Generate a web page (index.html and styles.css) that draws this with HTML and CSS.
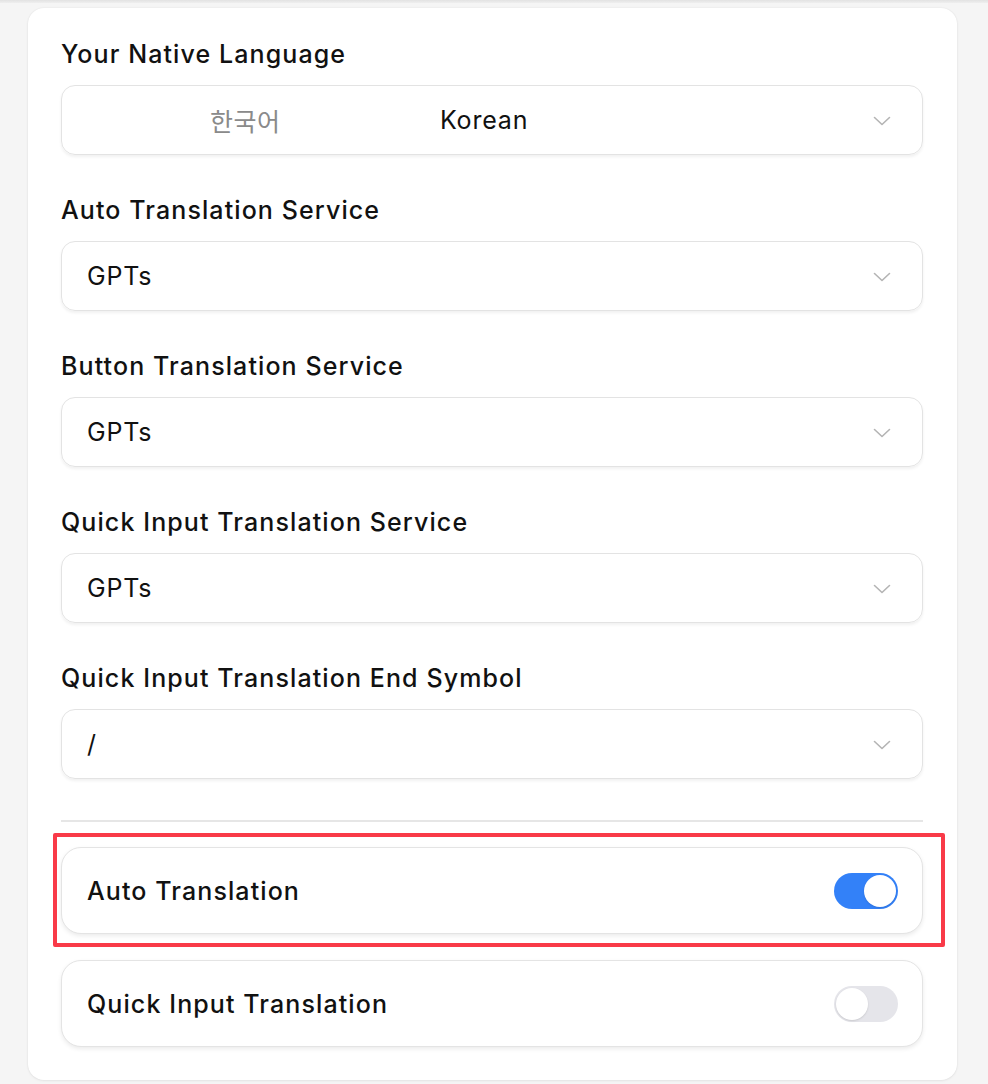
FILE: index.html
```html
<!DOCTYPE html>
<html lang="en">
<head>
<meta charset="utf-8">
<title>Settings</title>
<link rel="stylesheet" href="styles.css">
</head>
<body>
<div class="topbar"></div>
<main class="panel">
  <section class="field">
    <div class="label">Your Native Language</div>
    <div class="select">
      <span class="native">한국어</span>
      <span class="value">Korean</span>
      <svg class="chev" width="18" height="10" viewBox="0 0 18 10"><path d="M1.5 1.5 L9 8.5 L16.5 1.5" fill="none" stroke="#b4b4b4" stroke-width="1.6" stroke-linecap="round" stroke-linejoin="round"/></svg>
    </div>
  </section>
  <section class="field">
    <div class="label">Auto Translation Service</div>
    <div class="select">
      <span class="value">GPTs</span>
      <svg class="chev" width="18" height="10" viewBox="0 0 18 10"><path d="M1.5 1.5 L9 8.5 L16.5 1.5" fill="none" stroke="#b4b4b4" stroke-width="1.6" stroke-linecap="round" stroke-linejoin="round"/></svg>
    </div>
  </section>
  <section class="field">
    <div class="label">Button Translation Service</div>
    <div class="select">
      <span class="value">GPTs</span>
      <svg class="chev" width="18" height="10" viewBox="0 0 18 10"><path d="M1.5 1.5 L9 8.5 L16.5 1.5" fill="none" stroke="#b4b4b4" stroke-width="1.6" stroke-linecap="round" stroke-linejoin="round"/></svg>
    </div>
  </section>
  <section class="field">
    <div class="label">Quick Input Translation Service</div>
    <div class="select">
      <span class="value">GPTs</span>
      <svg class="chev" width="18" height="10" viewBox="0 0 18 10"><path d="M1.5 1.5 L9 8.5 L16.5 1.5" fill="none" stroke="#b4b4b4" stroke-width="1.6" stroke-linecap="round" stroke-linejoin="round"/></svg>
    </div>
  </section>
  <section class="field">
    <div class="label">Quick Input Translation End Symbol</div>
    <div class="select">
      <span class="value">/</span>
      <svg class="chev" width="18" height="10" viewBox="0 0 18 10"><path d="M1.5 1.5 L9 8.5 L16.5 1.5" fill="none" stroke="#b4b4b4" stroke-width="1.6" stroke-linecap="round" stroke-linejoin="round"/></svg>
    </div>
  </section>
  <hr class="divider">
  <div class="toggles">
    <div class="row-wrap">
      <div class="row">
        <span class="row-label">Auto Translation</span>
        <span class="switch on"><span class="knob"></span></span>
      </div>
      <div class="highlight"></div>
    </div>
    <div class="row-wrap">
      <div class="row">
        <span class="row-label">Quick Input Translation</span>
        <span class="switch"><span class="knob"></span></span>
      </div>
    </div>
  </div>
</main>
</body>
</html>
```

FILE: styles.css
```css
html, body {
  margin: 0;
  padding: 0;
}
body {
  background: #f5f5f5;
  font-family: Inter, "Noto Sans", "Noto Sans CJK KR", sans-serif;
  color: #111;
  height: 1084px;
  overflow: hidden;
}
.topbar {
  height: 3px;
  background: linear-gradient(#e2e2e2, #efefef);
}
.panel {
  box-sizing: border-box;
  width: 929px;
  margin: 5px 0 0 28px;
  background: #fff;
  border-radius: 16px;
  box-shadow: 0 0 2px rgba(0,0,0,0.08), 0 1px 3px rgba(0,0,0,0.05);
  padding: 30px 34px 33px 33px;
}
.field {
  margin-bottom: 39px;
}
.field:last-of-type {
  margin-bottom: 0;
}
.label {
  font-size: 25px;
  line-height: 32px;
  font-weight: 500;
  letter-spacing: 1.1px;
  margin-bottom: 15px;
}
.select {
  box-sizing: border-box;
  height: 70px;
  border: 1.5px solid #e3e3e3;
  border-radius: 14px;
  box-shadow: 0 2px 3px rgba(0,0,0,0.06);
  display: flex;
  align-items: center;
  padding: 0 31px 0 25px;
  font-size: 25px;
  letter-spacing: 0.8px;
}
.select .native {
  color: #8a8a8a;
  margin-left: 123px;
  width: 230px;
  letter-spacing: 0.5px;
}
.select .value {
  flex: 1;
  color: #111;
}
.chev {
  flex: none;
  margin-top: 1px;
}
.divider {
  border: none;
  height: 2px;
  background: #e6e6e6;
  margin: 41px 0 25px 0;
}
.toggles {
  display: flex;
  flex-direction: column;
  gap: 26px;
}
.row-wrap {
  position: relative;
}
.row {
  box-sizing: border-box;
  height: 87px;
  border: 1.5px solid #e4e4e4;
  border-radius: 20px;
  box-shadow: 0 2px 4px rgba(0,0,0,0.08);
  display: flex;
  align-items: center;
  justify-content: space-between;
  padding: 0 24px 0 25px;
  background: #fff;
}
.row-label {
  font-size: 25px;
  font-weight: 500;
  letter-spacing: 1.1px;
}
.switch {
  box-sizing: border-box;
  width: 64px;
  height: 36px;
  border-radius: 18px;
  background: #e5e5ea;
  padding: 2px;
  display: flex;
  justify-content: flex-start;
}
.switch.on {
  background: #3381f8;
  justify-content: flex-end;
}
.knob {
  width: 32px;
  height: 32px;
  border-radius: 50%;
  background: #fff;
  box-shadow: 0 1px 2px rgba(0,0,0,0.12);
}
.highlight {
  position: absolute;
  left: -8px;
  right: -22px;
  top: -14px;
  bottom: -13px;
  border: 4px solid #f93a48;
  border-radius: 2px;
  pointer-events: none;
}
```
